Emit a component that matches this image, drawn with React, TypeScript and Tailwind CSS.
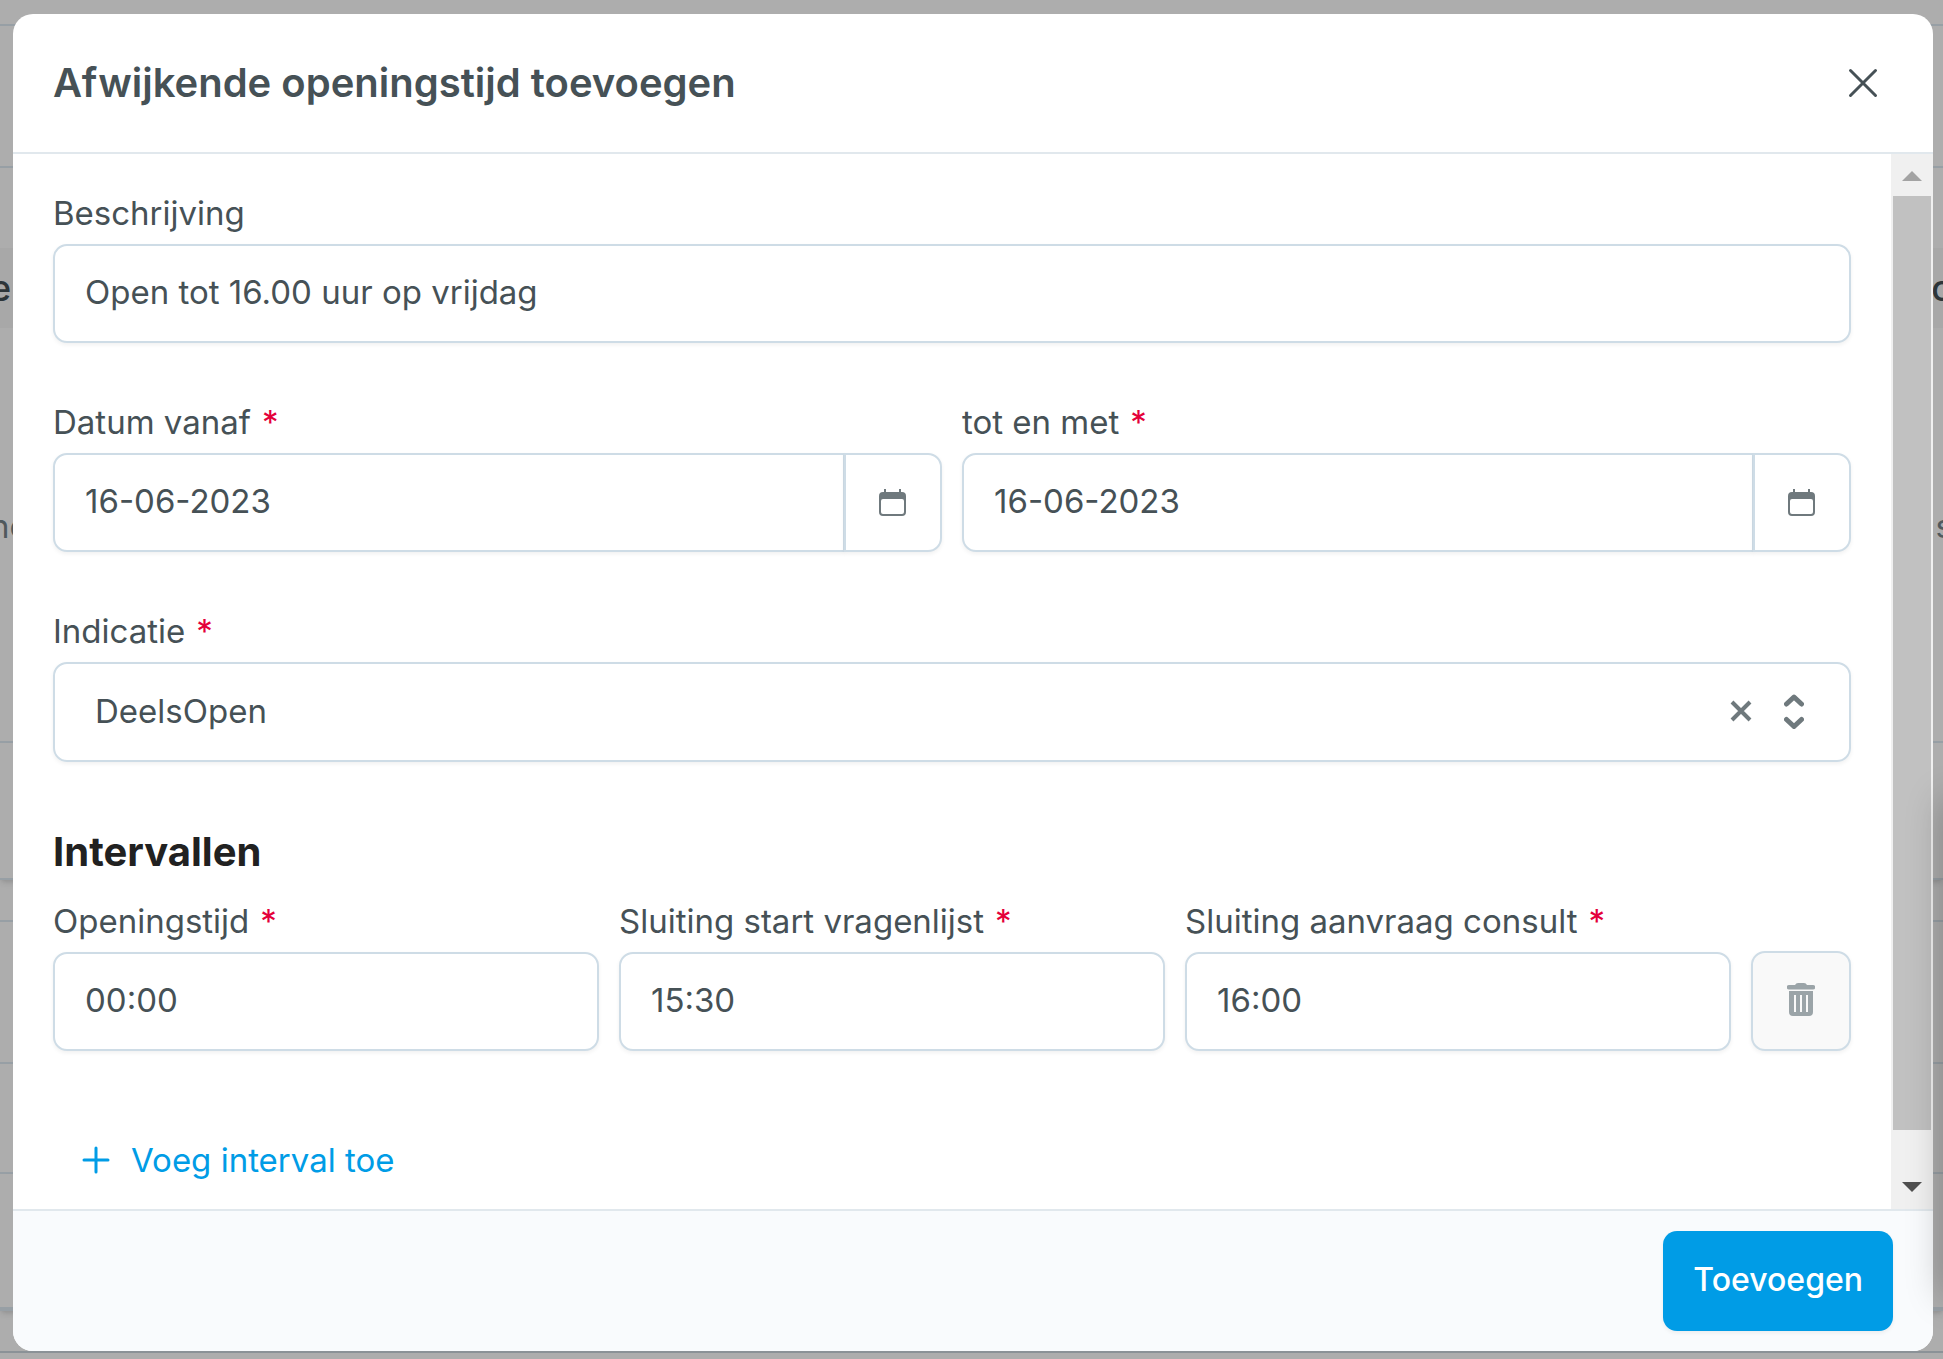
import type { ReactNode } from "react";

const fieldClass =
  "w-full min-w-0 border-2 border-[#cedce6] bg-white px-[30px] pb-1 text-[33px] leading-[40px] text-[#465156] shadow-[0_2px_4px_rgba(0,0,0,0.06)] outline-none";

const Label = ({
  htmlFor,
  required,
  children,
}: {
  htmlFor: string;
  required?: boolean;
  children: ReactNode;
}) => (
  <label
    htmlFor={htmlFor}
    className="mb-[10px] block text-[33px] leading-[42px]"
  >
    {children}
    {required && <span className="ml-[11px] text-[#e4003a]">*</span>}
  </label>
);

const TextField = ({
  id,
  label,
  value,
  required,
}: {
  id: string;
  label: string;
  value: string;
  required?: boolean;
}) => (
  <div className="min-w-0 flex-1">
    <Label htmlFor={id} required={required}>
      {label}
    </Label>
    <input
      id={id}
      type="text"
      defaultValue={value}
      className={`${fieldClass} h-[99px] rounded-[14px]`}
    />
  </div>
);

const CalendarIcon = () => (
  <svg viewBox="0 0 27 27" className="size-[27px]" fill="currentColor">
    <path d="M5 0h2v3h13V0h2v3h1a4 4 0 0 1 4 4v16a4 4 0 0 1-4 4H4a4 4 0 0 1-4-4V7a4 4 0 0 1 4-4h1zM4 10a2 2 0 0 0-2 2v11a2 2 0 0 0 2 2h19a2 2 0 0 0 2-2V12a2 2 0 0 0-2-2z" />
  </svg>
);

const DateField = ({
  id,
  label,
  value,
}: {
  id: string;
  label: string;
  value: string;
}) => (
  <div className="min-w-0 flex-1">
    <Label htmlFor={id} required>
      {label}
    </Label>
    <div className="flex h-[99px]">
      <input
        id={id}
        type="text"
        defaultValue={value}
        className={`${fieldClass} rounded-l-[14px]`}
      />
      <button
        type="button"
        aria-label="Kies datum"
        className="-ml-px flex w-[98px] shrink-0 items-center justify-center rounded-r-[14px] border-2 border-[#cedce6] bg-white pr-0.5 text-[#6f797d] shadow-[0_2px_4px_rgba(0,0,0,0.06)]"
      >
        <CalendarIcon />
      </button>
    </div>
  </div>
);

const intervals = [
  { id: "opening", label: "Openingstijd", value: "00:00" },
  { id: "vragenlijst", label: "Sluiting start vragenlijst", value: "15:30" },
  { id: "consult", label: "Sluiting aanvraag consult", value: "16:00" },
];

// The opening hours page that lies dimmed behind the dialog
const PageBehind = () => (
  <div
    aria-hidden="true"
    className="absolute inset-0 flex flex-col overflow-hidden bg-[#adadad]"
  >
    <div className="h-[26px] shrink-0 border-b-2 border-[#979fa5]" />
    <div className="h-[142px] shrink-0 border-b-2 border-[#979fa5]" />
    <div className="mt-20 flex h-20 shrink-0 items-center justify-between bg-[#a8a8a8] text-[36px] font-medium text-[#2d3539]">
      <span className="-ml-[10px]">e</span>
      <span className="-mr-[10px]">o</span>
    </div>
    <div className="flex h-[415px] shrink-0 items-center justify-between border-b-2 border-[#979fa5] pb-4 text-[33px] text-[#50595d]">
      <span className="-ml-[10px]">ne</span>
      <span className="-mr-[10px]">s</span>
    </div>
    <div className="h-[137px] shrink-0 border-b-2 border-[#979fa5] shadow-md" />
    <div className="h-[42px] shrink-0 border-b-2 border-[#979fa5]" />
    <div className="h-[142px] shrink-0 border-b-2 border-[#979fa5]" />
    <div className="h-[110px] shrink-0 border-b-2 border-[#979fa5]" />
    <div className="h-[137px] shrink-0 border-b-4 border-[#979fa5] shadow-md" />
    <div className="h-[42px] shrink-0 border-b-2 border-[#8b9297]" />
  </div>
);

const App = () => {
  return (
    <div className="relative flex h-screen flex-col overflow-hidden pt-[14px] pr-[10px] pb-2 pl-[13px] font-['Inter',sans-serif] text-[#465156]">
      <PageBehind />

      <div
        role="dialog"
        aria-labelledby="dialog-title"
        className="relative flex min-h-0 flex-1 flex-col overflow-hidden rounded-[20px] bg-white"
      >
        <header className="flex h-[140px] shrink-0 items-center justify-between border-b-2 border-[#e1e8ed] pr-[50px] pl-10">
          <h1
            id="dialog-title"
            className="text-[40px] leading-[48px] font-semibold"
          >
            Afwijkende openingstijd toevoegen
          </h1>
          <button type="button" aria-label="Sluiten" className="p-1">
            <svg
              viewBox="0 0 32 32"
              className="size-8"
              fill="none"
              stroke="currentColor"
              strokeWidth={3}
              strokeLinecap="round"
            >
              <path d="M3.5 3.5l25 25M28.5 3.5l-25 25" />
            </svg>
          </button>
        </header>

        <div className="flex min-h-0 flex-1">
          <main className="min-w-0 flex-1 overflow-hidden px-10 pt-[38px]">
            <TextField
              id="beschrijving"
              label="Beschrijving"
              value="Open tot 16.00 uur op vrijdag"
            />

            <div className="mt-[58px] flex gap-5">
              <DateField id="vanaf" label="Datum vanaf" value="16-06-2023" />
              <DateField id="tot" label="tot en met" value="16-06-2023" />
            </div>

            <div className="mt-[58px]">
              <Label htmlFor="indicatie" required>
                Indicatie
              </Label>
              <div className="flex h-[100px] items-center rounded-[14px] border-2 border-[#cedce6] pr-[45px] pb-0.5 pl-10 text-[#6f797d] shadow-[0_2px_4px_rgba(0,0,0,0.06)]">
                <select
                  id="indicatie"
                  defaultValue="DeelsOpen"
                  className="h-full min-w-0 flex-1 appearance-none bg-transparent text-[33px] leading-[40px] text-[#465156] outline-none"
                >
                  <option>DeelsOpen</option>
                </select>
                <button type="button" aria-label="Wissen">
                  <svg
                    viewBox="0 0 22 22"
                    className="size-[22px]"
                    stroke="currentColor"
                    strokeWidth={4}
                  >
                    <path d="M2 2l18 18M20 2L2 20" />
                  </svg>
                </button>
                <svg
                  viewBox="0 0 20 36"
                  className="ml-8 h-9 w-5"
                  fill="none"
                  stroke="currentColor"
                  strokeWidth={5}
                  strokeLinecap="round"
                  strokeLinejoin="round"
                >
                  <path d="M2.500 11l7.500-7 7.500 7M2.500 26.500l7.500 7 7.500-7" />
                </svg>
              </div>
            </div>

            <h2 className="mt-[66px] mb-6 text-[40px] leading-[48px] font-bold text-[#212121]">
              Intervallen
            </h2>
            <div className="flex items-end gap-5">
              {intervals.map((field) => (
                <TextField key={field.id} {...field} required />
              ))}
              <button
                type="button"
                disabled
                aria-label="Verwijder interval"
                className="flex size-[100px] shrink-0 items-center justify-center rounded-[14px] border-2 border-[#cedce6] bg-[#f9f9f9] pb-0.5 text-[#9ba4a8] shadow-[0_2px_4px_rgba(0,0,0,0.06)]"
              >
                <svg
                  viewBox="0 0 28 34"
                  className="h-[34px] w-7"
                  fill="currentColor"
                >
                  <path d="M8 2q1-2 3-2h6q2 0 3 2h6a2 2 0 0 1 0 4.500H2A2 2 0 0 1 2 2z" />
                  <path
                    fillRule="evenodd"
                    d="M2 8h24v21a4 4 0 0 1-4 4H6a4 4 0 0 1-4-4zM7 12v17h2V12zm6 0v17h2V12zm6 0v17h2V12z"
                  />
                </svg>
              </button>
            </div>

            <button
              type="button"
              className="mt-[60px] flex h-[100px] items-center gap-[21px] px-[29px] pb-0.5 text-[33px] leading-[40px] text-[#009ce6]"
            >
              <svg
                viewBox="0 0 28 28"
                className="size-7"
                stroke="currentColor"
                strokeWidth={3}
                strokeLinecap="round"
              >
                <path d="M14 2v24M2 14h24" />
              </svg>
              Voeg interval toe
            </button>
          </main>

          {/* scroll bar */}
          <div
            aria-hidden="true"
            className="flex w-[42px] shrink-0 flex-col items-center bg-[#f0f0f0]"
          >
            <div className="flex h-[42px] shrink-0 items-center justify-center pt-0.5 text-[#a3a3a3]">
              <svg
                viewBox="0 0 20 10"
                className="h-[10px] w-5"
                fill="currentColor"
              >
                <path d="M0 10L10 0l10 10z" />
              </svg>
            </div>
            <div className="w-[38px] flex-1 bg-[#c1c1c1]" />
            <div className="flex h-[79px] shrink-0 items-end justify-center pb-[17px] text-[#4f4f4f]">
              <svg
                viewBox="0 0 20 10"
                className="h-[10px] w-5"
                fill="currentColor"
              >
                <path d="M0 0l10 10L20 0z" />
              </svg>
            </div>
          </div>
        </div>

        <footer className="flex shrink-0 justify-end border-t-2 border-[#e1e8ed] bg-[#f9fbfd] px-10 py-5">
          <button
            type="button"
            className="h-[100px] rounded-[14px] bg-[#009ce6] px-[30px] pb-0.5 text-[32px] leading-[40px] font-medium text-white shadow-[0_2px_4px_rgba(0,0,0,0.06)]"
          >
            Toevoegen
          </button>
        </footer>
      </div>

      {/* shadow cast by the closed side panel, just off screen */}
      <div
        aria-hidden="true"
        className="pointer-events-none absolute top-[800px] -right-10 bottom-16 w-10 shadow-[0_0_36px_rgba(0,0,0,0.25)]"
      />
    </div>
  );
};

export default App;
